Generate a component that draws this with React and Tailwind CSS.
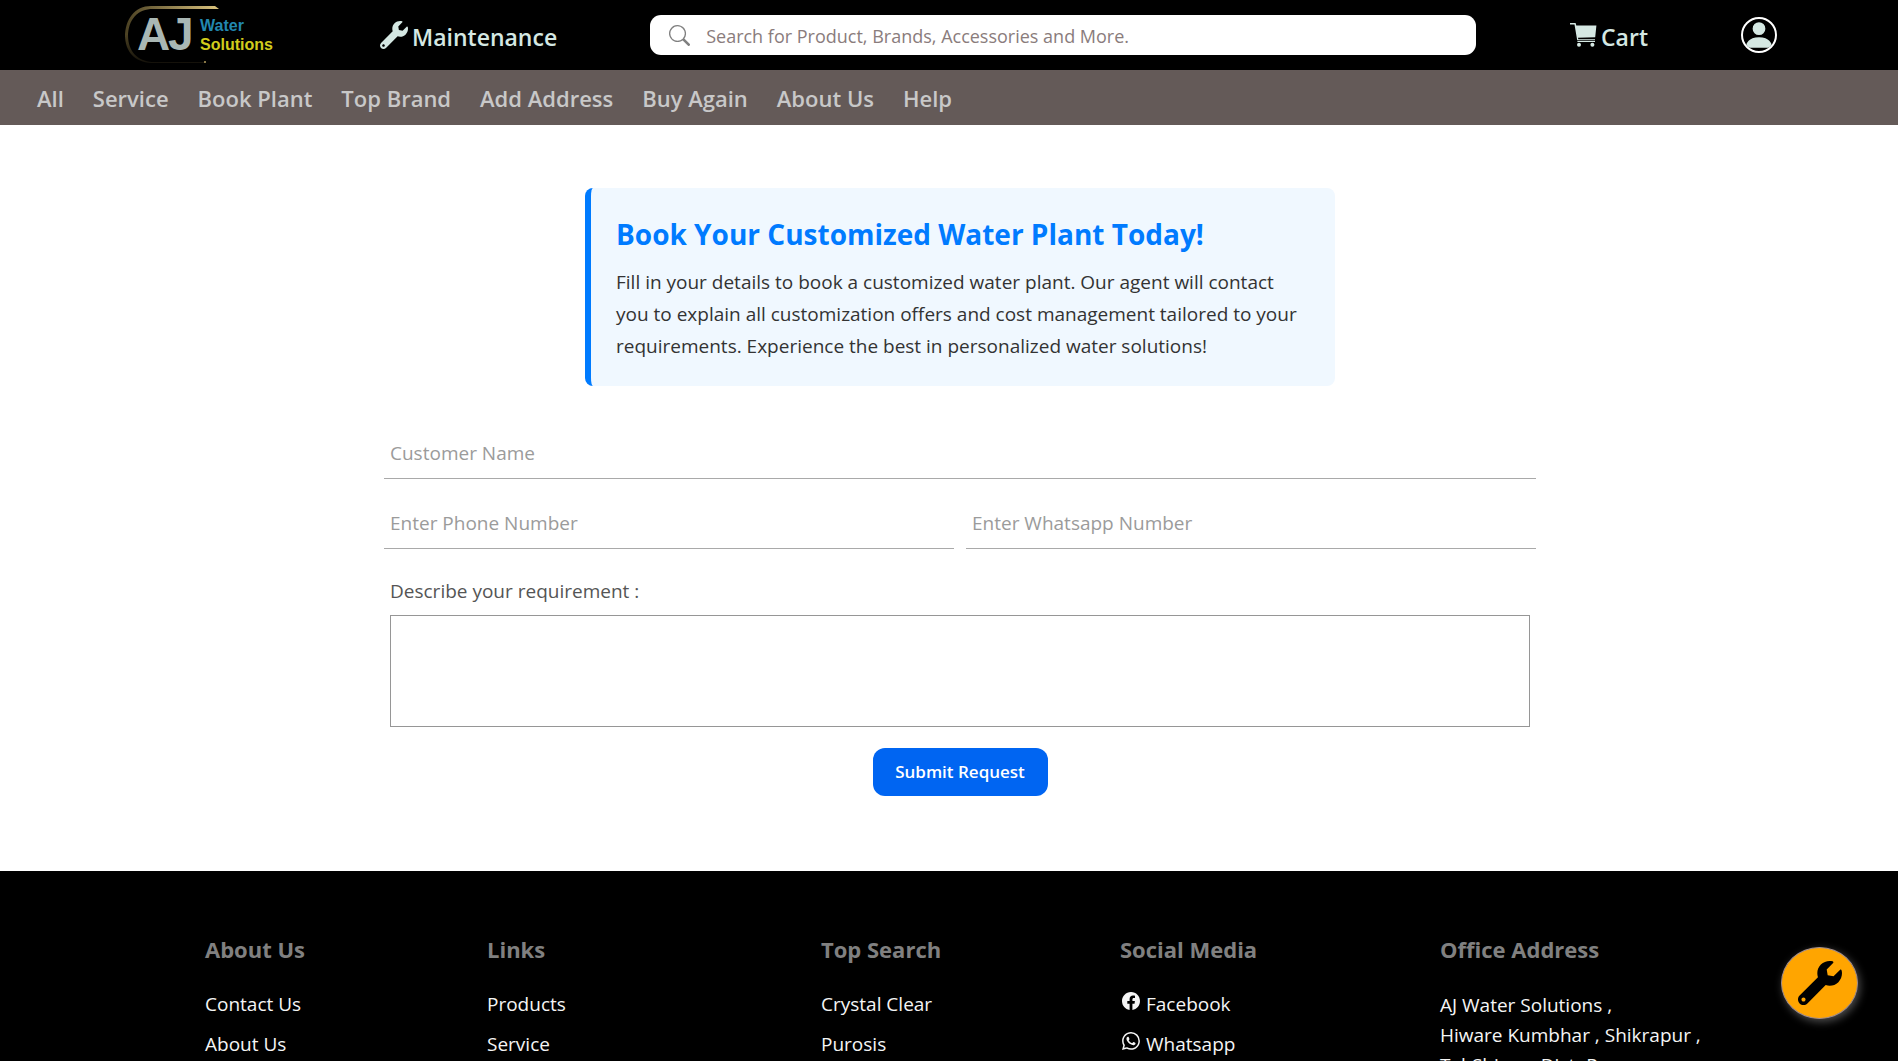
import { BsFacebook, BsPersonFill, BsSearch, BsWhatsapp } from "react-icons/bs";
import { FaWrench } from "react-icons/fa";

const navItems = ["All", "Service", "Book Plant", "Top Brand", "Add Address", "Buy Again", "About Us", "Help"];

const footerColumns = [
  { title: "About Us", links: [{ label: "Contact Us" }, { label: "About Us" }] },
  { title: "Links", links: [{ label: "Products" }, { label: "Service" }] },
  { title: "Top Search", links: [{ label: "Crystal Clear" }, { label: "Purosis" }] },
  {
    title: "Social Media",
    links: [
      { label: "Facebook", Icon: BsFacebook },
      { label: "Whatsapp", Icon: BsWhatsapp },
    ],
  },
];

function Logo() {
  return (
    <svg viewBox="0 0 160 60" className="h-[60px] w-[160px]" role="img" aria-label="AJ Water Solutions">
      <defs>
        <linearGradient id="gold" x1="0" y1="0" x2="1" y2="0">
          <stop offset="0" stopColor="#4a4022" />
          <stop offset="1" stopColor="#dcc47e" />
        </linearGradient>
        <linearGradient id="side" x1="0" y1="0" x2="0" y2="1">
          <stop offset="0" stopColor="#4a4022" />
          <stop offset="1" stopColor="#14110a" />
        </linearGradient>
      </defs>
      <path d="M0 32C0 14 10 1 26 1H90L94 4H28C13 4 3 14 3 32Z" fill="url(#gold)" />
      <path d="M0 30C0 47 10 57 26 58H80V57H27C13 56 3 47 3 30Z" fill="url(#side)" />
      <circle cx="80" cy="57" r="1" fill="#b39c5c" />
      <text x="12" y="45" fontFamily="Liberation Sans, Arial, sans-serif" fontWeight="700" fontSize="46" fill="#a9b7b4">
        <tspan>A</tspan>
        <tspan x="43">J</tspan>
      </text>
      <text x="75" y="26" fontFamily="Liberation Sans, Arial, sans-serif" fontWeight="700" fontSize="16" fill="#2288b0">
        Water
      </text>
      <text x="75" y="45" fontFamily="Liberation Sans, Arial, sans-serif" fontWeight="700" fontSize="16" fill="#d2cc1c">
        Solutions
      </text>
    </svg>
  );
}

function CartIcon() {
  return (
    <svg viewBox="0 0 27 24" className="h-6 w-[27px]" fill="currentColor" aria-hidden="true">
      <path d="M0 0H5.6L6.3 2.6H26.4L25.2 14.2L8 14.8L8.3 16.2H25V17.2H7.2L4.5 1.6H0Z" />
      <path d="M7.4 18H25V19H7.4Z" />
      <circle cx="9" cy="21.7" r="2" />
      <circle cx="22.4" cy="21.7" r="2" />
    </svg>
  );
}

function LineField({ id, label, type = "text", className = "" }) {
  return (
    <div className={className}>
      <input
        id={id}
        type={type}
        aria-label={label}
        placeholder={label}
        className="block h-[50px] w-full border-b border-[#a9a9a9] bg-transparent px-1.5 pb-0.5 text-[19px] text-[#444] outline-none placeholder:text-[#9b9b9b]"
      />
    </div>
  );
}

function Header() {
  return (
    <header>
      <div className="flex h-[70px] items-center bg-black pl-[125px] pr-[121px] text-[#d5e8e3]">
        <a href="#home" className="shrink-0">
          <Logo />
        </a>
        <a href="#maintenance" className="ml-[95px] flex shrink-0 items-center gap-1">
          <FaWrench className="size-7" />
          <span className="pt-1 text-[23px] font-semibold leading-8">Maintenance</span>
        </a>
        <form className="ml-[93px] flex h-10 flex-1 items-center gap-4 rounded-[11px] bg-white px-[19px]" role="search">
          <BsSearch className="size-[21px] shrink-0 text-[#808080]" />
          <input
            type="search"
            aria-label="Search"
            placeholder="Search for Product, Brands, Accessories and More."
            className="w-full bg-transparent pt-0.5 text-[18px] text-[#444] outline-none placeholder:text-[#8a7c7c]"
          />
        </form>
        <a href="#cart" className="ml-[94px] flex shrink-0 items-center gap-1">
          <CartIcon />
          <span className="pt-1 text-[23px] font-semibold leading-8">Cart</span>
        </a>
        <button
          type="button"
          aria-label="Account"
          className="ml-[93px] flex size-9 shrink-0 items-center justify-center overflow-hidden rounded-full border-2 border-white"
        >
          <BsPersonFill className="size-[34px] shrink-0" />
        </button>
      </div>
      <nav className="flex h-[55px] items-center gap-[29px] bg-[#645a58] px-[37px] pt-0.5 text-[22px] font-semibold text-[#c8c8c8]">
        {navItems.map((item) => (
          <a key={item} href="#nav">
            {item}
          </a>
        ))}
      </nav>
    </header>
  );
}

function BookingForm() {
  return (
    <main className="pb-[75px] pl-[22px] pt-[63px]">
      <section className="mx-auto max-w-[750px] rounded-lg border-l-[6px] border-[#007bff] bg-[#f0f8ff] py-6 pl-[25px] pr-6">
        <h1 className="text-[28px] font-bold leading-[44px] text-[#007bff]">Book Your Customized Water Plant Today!</h1>
        <p className="mt-2.5 text-[19px] leading-8 text-[#333]">
          Fill in your details to book a customized water plant. Our agent will contact you to explain all customization
          offers and cost management tailored to your requirements. Experience the best in personalized water solutions!
        </p>
      </section>
      <form className="mx-auto mt-[43px] max-w-[1152px]">
        <div className="grid grid-cols-2 gap-x-3 gap-y-5">
          <LineField id="name" label="Customer Name" className="col-span-2" />
          <LineField id="phone" label="Enter Phone Number" type="tel" />
          <LineField id="whatsapp" label="Enter Whatsapp Number" type="tel" />
        </div>
        <div className="mt-7 px-1.5">
          <label htmlFor="requirement" className="block text-[19px] leading-7 text-[#555]">
            Describe your requirement :
          </label>
          <textarea id="requirement" className="mt-2.5 block h-28 w-full resize-none border border-[#969696] p-2 text-[19px] outline-none" />
        </div>
        <button
          type="submit"
          className="mx-auto mt-[21px] block h-12 w-[175px] rounded-xl bg-[#0065f2] text-[17px] font-semibold text-white"
        >
          Submit Request
        </button>
      </form>
    </main>
  );
}

function Footer() {
  return (
    <footer className="grid grid-cols-[282fr_334fr_299fr_320fr_458fr] bg-black pb-8 pl-[205px] pt-[63px] text-[#f5f5f5]">
      {footerColumns.map(({ title, links }) => (
        <section key={title}>
          <h2 className="text-[22px] font-bold leading-[30px] text-[#808080]">{title}</h2>
          <ul className="mt-5 text-[19px] leading-10">
            {links.map(({ label, Icon }) => (
              <li key={label}>
                <a href="#footer" className="flex items-center gap-1.5">
                  {Icon && <Icon className="mb-1.5 ml-0.5 size-[18px]" />}
                  {label}
                </a>
              </li>
            ))}
          </ul>
        </section>
      ))}
      <section>
        <h2 className="text-[22px] font-bold leading-[30px] text-[#808080]">Office Address</h2>
        <address className="mt-[26px] text-[19px] not-italic leading-[30px]">
          AJ Water Solutions ,<br />
          Hiware Kumbhar , Shikrapur ,<br />
          Tal-Shirur , Dist- Pune
        </address>
      </section>
    </footer>
  );
}

export default function App() {
  return (
    <div className="min-h-screen bg-white font-['Open_Sans',sans-serif]">
      <Header />
      <BookingForm />
      <Footer />
      <button
        type="button"
        aria-label="Book maintenance"
        className="fixed bottom-[42px] right-10 flex h-[72px] w-[77px] items-center justify-center rounded-[50%] border border-[#a08c8c] bg-[#ffa500] text-black shadow-[2px_3px_8px_rgba(255,255,255,0.3)]"
      >
        <FaWrench className="size-11" />
      </button>
    </div>
  );
}
